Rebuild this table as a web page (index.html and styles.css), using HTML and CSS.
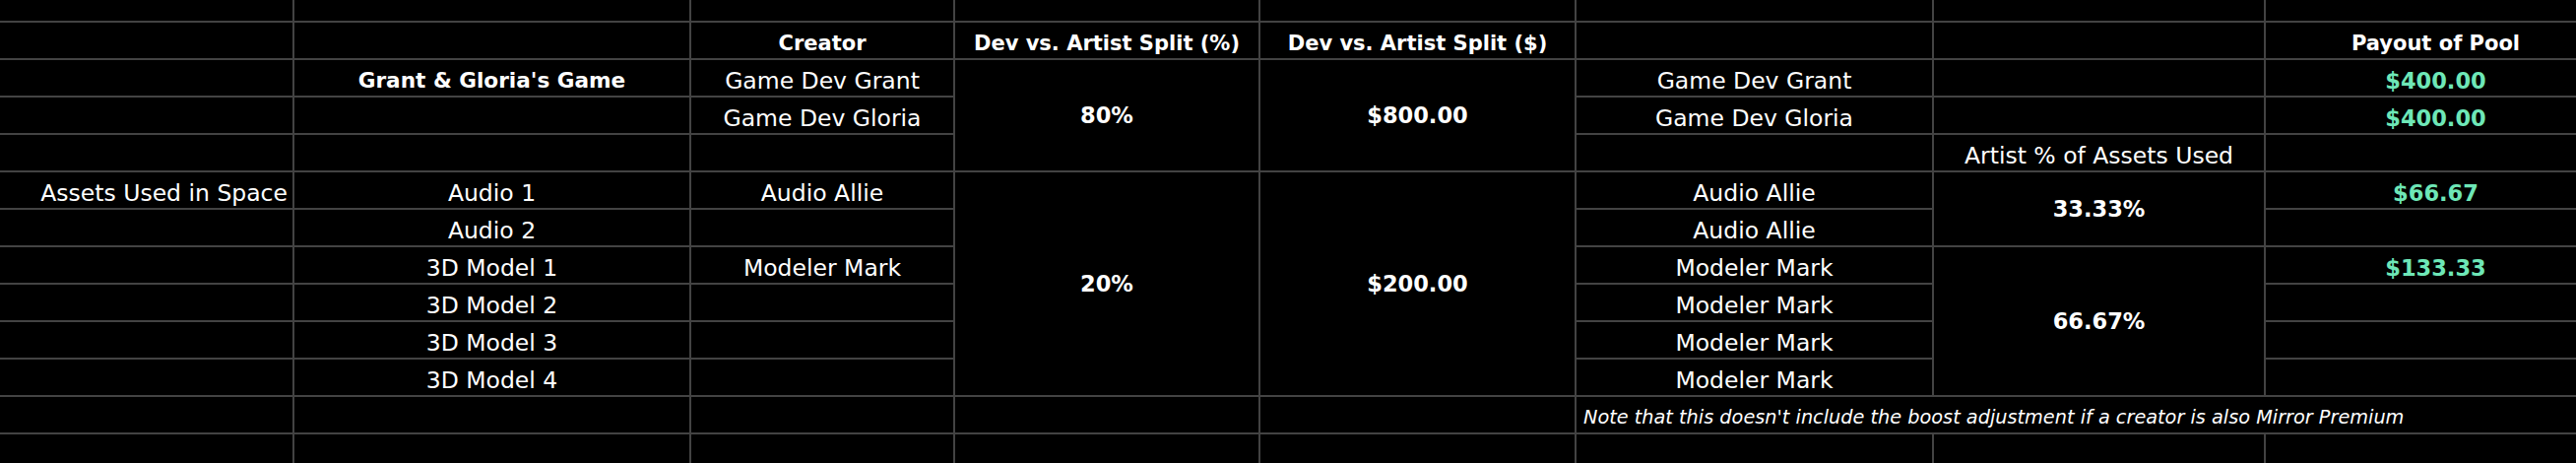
FILE: index.html
```html
<!DOCTYPE html>
<html>
<head>
<meta charset="utf-8">
<link rel="stylesheet" href="styles.css">
</head>
<body>
<div class="sheet">
  <!-- row 0 -->
  <div class="c"></div><div class="c"></div><div class="c"></div><div class="c"></div><div class="c"></div><div class="c"></div><div class="c"></div><div class="c"></div>
  <!-- row 1 -->
  <div class="c"></div><div class="c"></div>
  <div class="c b">Creator</div>
  <div class="c b">Dev vs. Artist Split (%)</div>
  <div class="c b">Dev vs. Artist Split ($)</div>
  <div class="c"></div><div class="c"></div>
  <div class="c b">Payout of Pool</div>
  <!-- row 2 -->
  <div class="c"></div>
  <div class="c b title">Grant &amp; Gloria's Game</div>
  <div class="c">Game Dev Grant</div>
  <div class="c v mid rs3">80%</div>
  <div class="c v mid rs3">$800.00</div>
  <div class="c">Game Dev Grant</div>
  <div class="c"></div>
  <div class="c v g">$400.00</div>
  <!-- row 3 -->
  <div class="c"></div><div class="c"></div>
  <div class="c">Game Dev Gloria</div>
  <div class="c">Game Dev Gloria</div>
  <div class="c"></div>
  <div class="c v g">$400.00</div>
  <!-- row 4 -->
  <div class="c"></div><div class="c"></div><div class="c"></div><div class="c"></div>
  <div class="c">Artist % of Assets Used</div>
  <div class="c"></div>
  <!-- row 5 -->
  <div class="c right">Assets Used in Space</div>
  <div class="c">Audio 1</div>
  <div class="c">Audio Allie</div>
  <div class="c v mid rs6">20%</div>
  <div class="c v mid rs6">$200.00</div>
  <div class="c">Audio Allie</div>
  <div class="c v mid rs2">33.33%</div>
  <div class="c v g">$66.67</div>
  <!-- row 6 -->
  <div class="c"></div>
  <div class="c">Audio 2</div>
  <div class="c"></div>
  <div class="c">Audio Allie</div>
  <div class="c"></div>
  <!-- row 7 -->
  <div class="c"></div>
  <div class="c">3D Model 1</div>
  <div class="c">Modeler Mark</div>
  <div class="c">Modeler Mark</div>
  <div class="c v mid rs4">66.67%</div>
  <div class="c v g">$133.33</div>
  <!-- row 8 -->
  <div class="c"></div>
  <div class="c">3D Model 2</div>
  <div class="c"></div>
  <div class="c">Modeler Mark</div>
  <div class="c"></div>
  <!-- row 9 -->
  <div class="c"></div>
  <div class="c">3D Model 3</div>
  <div class="c"></div>
  <div class="c">Modeler Mark</div>
  <div class="c"></div>
  <!-- row 10 -->
  <div class="c"></div>
  <div class="c">3D Model 4</div>
  <div class="c"></div>
  <div class="c">Modeler Mark</div>
  <div class="c"></div>
  <!-- row 11 -->
  <div class="c"></div><div class="c"></div><div class="c"></div><div class="c"></div><div class="c"></div>
  <div class="c note cs3">Note that this doesn't include the boost adjustment if a creator is also Mirror Premium</div>
  <!-- row 12 -->
  <div class="c"></div><div class="c"></div><div class="c"></div><div class="c"></div><div class="c"></div><div class="c"></div><div class="c"></div><div class="c"></div>
</div>
</body>
</html>
```

FILE: styles.css
```css
html, body {
  margin: 0;
  padding: 0;
  background: #000;
  overflow: hidden;
  width: 2616px;
  height: 470px;
}

.sheet {
  display: grid;
  grid-template-columns: 297px 401px 266px 308px 319px 361px 335px 345px;
  grid-template-rows: 21px repeat(11, 36px) 29px;
  gap: 2px;
  width: 2646px;
  background: #434343;
  font-family: "DejaVu Sans", sans-serif;
  font-size: 23.5px;
  color: #fff;
}

.c {
  background: #000;
  display: flex;
  align-items: flex-end;
  justify-content: center;
  white-space: nowrap;
  line-height: 26px;
  padding-bottom: 2px;
  overflow: visible;
}

.b {
  font-weight: bold;
  font-size: 21px;
}

.title {
  font-size: 21.6px;
}

.v {
  font-weight: bold;
  font-size: 22.5px;
}

.g {
  color: #6ee7b7;
}

.mid {
  align-items: center;
  padding-bottom: 0;
}

.right {
  justify-content: flex-end;
  padding-right: 5px;
}

.rs2 { grid-row: span 2; }
.rs3 { grid-row: span 3; }
.rs4 { grid-row: span 4; }
.rs6 { grid-row: span 6; }
.cs3 { grid-column: span 3; }

.note {
  justify-content: flex-start;
  padding-left: 7px;
  font-style: italic;
  font-size: 19.3px;
}
```
